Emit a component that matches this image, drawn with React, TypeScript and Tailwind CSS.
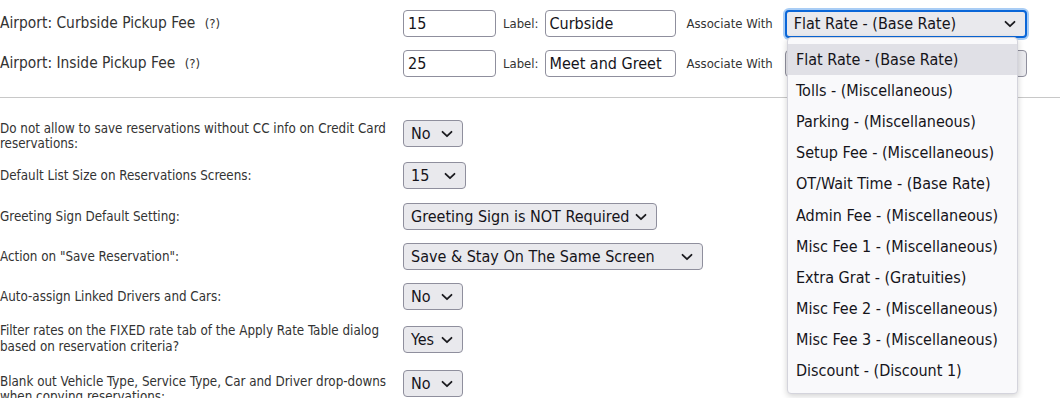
import React from "react";

const FONT = { fontFamily: '"DejaVu Sans Condensed", "DejaVu Sans", sans-serif' };

function Chevron() {
  return (
    <svg width="12" height="8" viewBox="0 0 12 8" className="shrink-0">
      <path d="M1.5 1.8 L6 6.2 L10.5 1.8" fill="none" stroke="#1b1b1f" strokeWidth="1.8" strokeLinecap="round" strokeLinejoin="round" />
    </svg>
  );
}

function Select({ text, cls, focused }: { text: string; cls: string; focused?: boolean }) {
  return (
    <div
      className={
        "flex items-center justify-between rounded-[4px] bg-[#e9e9ed] pl-[7px] pr-[9px] text-[16px] text-[#15141a] " +
        (focused
          ? "border-2 border-[#0a66d8] shadow-[0_0_0_2px_#a9cdf5] "
          : "border border-[#8f8f9d] ") +
        cls
      }
    >
      <span className="whitespace-nowrap">{text}</span>
      <Chevron />
    </div>
  );
}

function TextInput({ value, cls }: { value: string; cls: string }) {
  return (
    <div className={"flex items-center rounded-[4px] border border-[#8f8f9d] bg-white px-[4px] text-[16px] text-[#15141a] " + cls}>
      {value}
    </div>
  );
}

const options = [
  "Flat Rate - (Base Rate)",
  "Tolls - (Miscellaneous)",
  "Parking - (Miscellaneous)",
  "Setup Fee - (Miscellaneous)",
  "OT/Wait Time - (Base Rate)",
  "Admin Fee - (Miscellaneous)",
  "Misc Fee 1 - (Miscellaneous)",
  "Extra Grat - (Gratuities)",
  "Misc Fee 2 - (Miscellaneous)",
  "Misc Fee 3 - (Miscellaneous)",
  "Discount - (Discount 1)",
];

export default function App() {
  return (
    <div className="relative h-[398px] w-[1060px] overflow-hidden bg-white text-[13px] text-[#333]" style={FONT}>
      {/* top section */}
      <div className="pt-[10px]">
        <div className="flex h-[27px] items-center">
          <div className="w-[403px] whitespace-nowrap text-[15.4px]">
            Airport: Curbside Pickup Fee <span className="ml-[5px] text-[13px]">(?)</span>
          </div>
          <TextInput value="15" cls="h-[27px] w-[93px]" />
          <span className="ml-[7px] mr-[6px]">Label:</span>
          <TextInput value="Curbside" cls="h-[27px] w-[131px]" />
          <span className="ml-[11px] mr-[12px] whitespace-nowrap">Associate With</span>
          <Select text="Flat Rate - (Base Rate)" cls="h-[28px] w-[242px]" focused />
        </div>
        <div className="mt-[13px] flex h-[27px] items-center">
          <div className="w-[403px] whitespace-nowrap text-[15.4px]">
            Airport: Inside Pickup Fee <span className="ml-[5px] text-[13px]">(?)</span>
          </div>
          <TextInput value="25" cls="h-[27px] w-[93px]" />
          <span className="ml-[7px] mr-[6px]">Label:</span>
          <TextInput value="Meet and Greet" cls="h-[27px] w-[131px]" />
          <span className="ml-[11px] mr-[12px] whitespace-nowrap">Associate With</span>
          <Select text="Flat Rate - (Base Rate)" cls="h-[27px] w-[242px]" />
        </div>
      </div>

      <div className="mt-[20px] h-px w-full bg-[#c8c8c8]" />

      {/* lower section */}
      <div className="text-[13.3px] leading-[15px]">
        <div className="mt-[22px] flex h-[30px] items-start">
          <div className="w-[403px] pt-[1px]">
            Do not allow to save reservations without CC info on Credit Card
            <br />
            reservations:
          </div>
          <Select text="No" cls="h-[27px] w-[60px]" />
        </div>
        <div className="mt-[12px] flex h-[27px] items-center">
          <div className="w-[403px]">Default List Size on Reservations Screens:</div>
          <Select text="15" cls="h-[27px] w-[63px]" />
        </div>
        <div className="mt-[14px] flex h-[27px] items-center">
          <div className="w-[403px]">Greeting Sign Default Setting:</div>
          <Select text="Greeting Sign is NOT Required" cls="h-[27px] w-[254px]" />
        </div>
        <div className="mt-[13px] flex h-[27px] items-center">
          <div className="w-[403px]">Action on "Save Reservation":</div>
          <Select text="Save & Stay On The Same Screen" cls="h-[27px] w-[300px]" />
        </div>
        <div className="mt-[13px] flex h-[27px] items-center">
          <div className="w-[403px]">Auto-assign Linked Drivers and Cars:</div>
          <Select text="No" cls="h-[27px] w-[60px]" />
        </div>
        <div className="mt-[13px] flex h-[30px] items-start">
          <div className="w-[403px] leading-[16px]">
            Filter rates on the FIXED rate tab of the Apply Rate Table dialog
            <br />
            based on reservation criteria?
          </div>
          <Select text="Yes" cls="mt-[3px] h-[27px] w-[60px]" />
        </div>
        <div className="mt-[17px] flex h-[30px] items-start">
          <div className="w-[403px] pt-[4px]">
            Blank out Vehicle Type, Service Type, Car and Driver drop-downs
            <br />
            when copying reservations:
          </div>
          <Select text="No" cls="h-[27px] w-[60px]" />
        </div>
      </div>

      {/* open dropdown list */}
      <div className="absolute left-[787px] top-[37px] w-[231px] rounded-[4px] border border-[#d4d4dc] bg-[#f9f9fb] py-[6px] text-[16px] text-[#15141a] shadow-[0_2px_6px_rgba(0,0,0,0.18)]">
        {options.map((o, i) => (
          <div
            key={o}
            className={"flex h-[31.2px] items-center whitespace-nowrap px-[8px] " + (i === 0 ? "bg-[#e0e0e6]" : "")}
          >
            {o}
          </div>
        ))}
      </div>
    </div>
  );
}
